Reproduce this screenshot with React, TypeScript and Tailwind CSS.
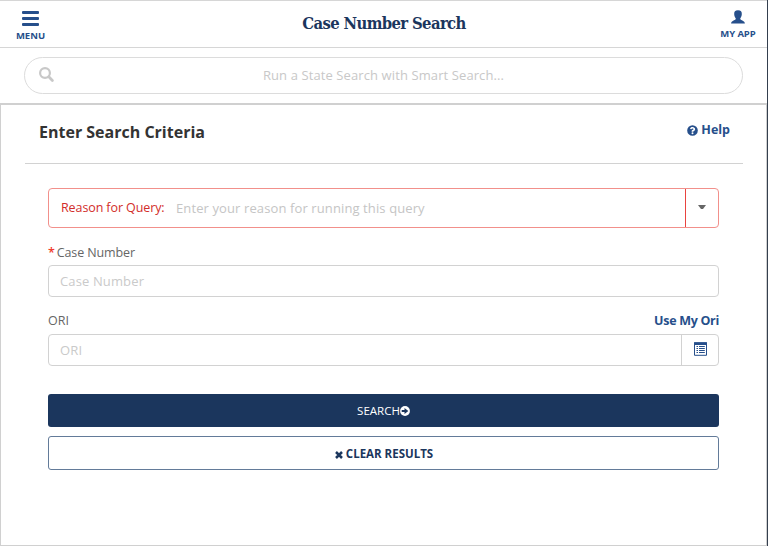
import React from "react";

const SearchIcon = () => (
  <svg className="mt-[9px] ml-[14px] h-4 w-4 shrink-0" viewBox="0 0 16 16" fill="none" stroke="#c8c8c8">
    <circle cx="6" cy="6" r="4.9" strokeWidth="2.2" />
    <path d="M9.8 9.8 L13.400 13.400" strokeWidth="2.8" strokeLinecap="round" />
  </svg>
);

const UserIcon = () => (
  <svg className="h-[14px] w-[14px]" viewBox="0 0 14 14" fill="#264f8b">
    <path d="M7 .2C9.900 .2 11 1.800 10.800 4.200C10.700 6 10.100 7.300 9.300 8.300V9.300C9.900 10.200 13.700 10.800 13.900 13.400H.1C.3 10.800 4.100 10.200 4.700 9.300V8.300C3.900 7.300 3.300 6 3.200 4.200C3 1.800 4.100 .2 7 .2Z" />
  </svg>
);

const HelpIcon = () => (
  <svg className="h-[11px] w-[11px]" viewBox="0 0 512 512" fill="#264f8b">
    <path d="M504 256a248 248 0 1 1-496 0a248 248 0 1 1 496 0zM262.700 90c-54.500 0-89.300 23-116.500 63.800-3.500 5.300-2.400 12.400 2.700 16.300l34.700 26.300c5.200 3.900 12.600 3 16.700-2.100 17.900-22.700 30.100-35.800 57.300-35.800 20.400 0 45.700 13.100 45.700 33 0 15-12.400 22.700-32.500 34C247.100 238.500 216 254.900 216 296v4c0 6.600 5.400 12 12 12h56c6.600 0 12-5.400 12-12v-1.300c0-28.500 83.200-29.600 83.200-106.700 0-58-60.200-102-116.500-102zM256 338a46 46 0 1 0 0 92a46 46 0 0 0 0-92z" />
  </svg>
);

const ListIcon = () => (
  <svg className="h-[14px] w-[13px]" viewBox="0 0 13 14">
    <path d="M.5 1H12.500V13.300H.5Z" fill="none" stroke="#264f8b" />
    <path d="M0 .2H13V3H0Z" fill="#264f8b" />
    <path d="M2.500 4.500H4M2.500 6.500H4M2.500 8.500H4M2.500 10.500H4M5 4.500H10.800M5 6.500H10.800M5 8.500H10.800M5 10.500H10.800" stroke="#264f8b" />
  </svg>
);

const ArrowIcon = () => (
  <svg className="h-[10px] w-[10px]" viewBox="0 0 10 10">
    <circle cx="5" cy="5" r="4.900" fill="#fff" />
    <path d="M1.700 4H4.500V1.900L8.300 5L4.500 8.100V6H1.700Z" fill="#1b365d" />
  </svg>
);

const ClearIcon = () => (
  <svg className="mt-[2px] mr-[3px] h-2 w-2" viewBox="0 0 8 8" fill="none" stroke="#1b365d">
    <path d="M1 1L7 7M7 1L1 7" strokeWidth="2.500" />
  </svg>
);

export default function App() {
  return (
    <div className="flex h-[546px] w-[768px] bg-white font-['Open_Sans',sans-serif]">
      <div className="flex w-[767px] flex-col">
        <header className="flex h-12 shrink-0 justify-between border-y border-[#d6d6d6] text-[#264f8b]">
          <div className="flex w-[61px] flex-col items-center pt-[10px]">
            <div className="flex h-[15px] w-[17px] flex-col justify-between">
              <span className="h-[3px] rounded-[1px] bg-[#264f8b]" />
              <span className="h-[3px] rounded-[1px] bg-[#264f8b]" />
              <span className="h-[3px] rounded-[1px] bg-[#264f8b]" />
            </div>
            <span className="mt-[3px] text-[9.500px] leading-[13px] font-bold">MENU</span>
          </div>
          <h1 className="pt-[11px] pr-[2px] font-['DejaVu_Serif_Condensed','DejaVu_Serif',serif] text-[16.500px] leading-6 font-bold tracking-[-0.63px] text-[#1b365d]">
            Case Number Search
          </h1>
          <div className="flex w-[58px] flex-col items-center pt-[9px]">
            <UserIcon />
            <span className="mt-[3px] text-[9.500px] leading-[13px] font-bold tracking-[-0.1px] whitespace-nowrap">MY APP</span>
          </div>
        </header>

        <div className="flex h-[55px] shrink-0 px-6 pt-[9px]">
          <div className="flex h-[37px] w-[720px] rounded-full border border-[#dcdcdc]">
            <SearchIcon />
            <span className="grow pr-[30px] text-center text-[13px] leading-[35px] tracking-[0.1px] text-[#c8c8c8]">
              Run a State Search with Smart Search...
            </span>
          </div>
        </div>

        <main className="flex grow flex-col border border-t-2 border-[#d0d0d0] pr-[23px] pl-6">
          <div className="flex h-[59px] shrink-0 justify-between border-b border-[#d2d2d2] pr-[13px] pl-[14px]">
            <h2 className="pt-[15px] text-[16px] leading-6 font-bold text-[#333]">Enter Search Criteria</h2>
            <div className="mt-[15px] flex h-5 items-center gap-[3px] text-[12.500px] font-bold text-[#264f8b]">
              <HelpIcon />
              <span>Help</span>
            </div>
          </div>

          <div className="flex flex-col pt-6 pr-6 pl-[23px]">
            <div className="flex h-10 rounded-[4px] border border-[#f2908b] text-[13px] leading-[38px]">
              <span className="ml-3 w-[115px] text-[12.500px] tracking-[-0.1px] text-[#d22d2a]">Reason for Query:</span>
              <span className="grow tracking-[0.11px] text-[#c5c5c5]">Enter your reason for running this query</span>
              <span className="flex w-[33px] items-center justify-center border-l border-l-[#e9433f]">
                <svg className="mb-[2px] h-1 w-2" viewBox="0 0 8 4"><path d="M0 0H8L5 4H3Z" fill="#666" /></svg>
              </span>
            </div>

            <div className="mt-4 h-[18px] text-[12.500px] leading-[18px] tracking-[-0.12px] text-[#666]">
              <span className="mr-[2px] font-semibold text-[#f03a2e]">*</span>Case Number
            </div>
            <div className="mt-[3px] h-8 rounded-[4px] border border-[#d2d2d2] pl-[11px] text-[13px] leading-[31px] tracking-[0.13px] text-[#cacaca]">
              Case Number
            </div>

            <div className="mt-[15px] flex h-[18px] justify-between text-[12.500px] leading-[18px] text-[#666]">
              <span>ORI</span>
              <span className="font-bold tracking-[-0.3px] text-[#264f8b]">Use My Ori</span>
            </div>
            <div className="mt-1 flex h-8 rounded-[4px] border border-[#d2d2d2] pl-[11px] text-[13px] leading-[31px] tracking-[0.13px] text-[#cacaca]">
              <span className="grow">ORI</span>
              <span className="flex w-[37px] items-center justify-center border-l border-[#d2d2d2] pb-[2px]">
                <ListIcon />
              </span>
            </div>

            <button className="mt-7 flex h-[33px] items-center justify-center rounded-[3px] bg-[#1b365d] text-[11.500px] text-white">
              SEARCH
              <ArrowIcon />
            </button>
            <button className="mt-[9px] flex h-[34px] items-center justify-center rounded-[3px] border border-[#637b99] pt-px pl-px text-[11.500px] font-bold text-[#1b365d]">
              <ClearIcon />
              CLEAR RESULTS
            </button>
          </div>
        </main>
      </div>
      <div className="w-px bg-[#343f4e]" />
    </div>
  );
}
